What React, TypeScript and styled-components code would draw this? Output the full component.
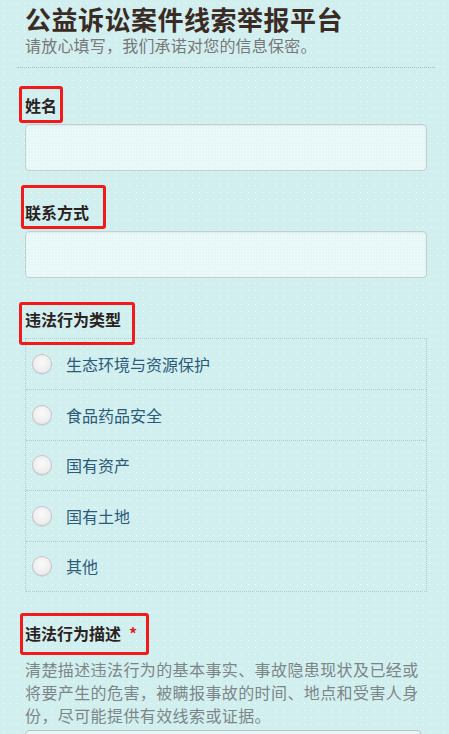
import React from 'react'
import styled, { createGlobalStyle } from 'styled-components'

const GlobalStyle = createGlobalStyle`
  html, body {
    margin: 0;
    padding: 0;
  }
  body {
    background-color: #d2eff0;
    background-image: radial-gradient(rgba(255, 255, 255, 0.7) 0.7px, transparent 1px);
    background-size: 7px 7px;
    font-family: 'Noto Sans CJK SC', 'Noto Sans', sans-serif;
    overflow: hidden;
  }
`

const Page = styled.div`
  padding: 0 14px 0 17px;
`

const Header = styled.header`
  padding: 4px 8px 12px;
  border-bottom: 1px dotted #a9bcbc;
`

const Title = styled.h1`
  margin: 0;
  font-size: 26px;
  line-height: 30px;
  font-weight: 700;
  letter-spacing: 0.5px;
  color: #3a2b24;
`

const Subtitle = styled.p`
  margin: 1px 0 0;
  font-size: 16px;
  line-height: 20px;
  letter-spacing: 0.2px;
  color: #777777;
`

const Form = styled.form`
  padding: 26px 8px 0;
  display: flex;
  flex-direction: column;
  gap: 30px;
`

const Field = styled.div`
  display: flex;
  flex-direction: column;
  gap: 8px;
`

const LabelRow = styled.div`
  position: relative;
  font-size: 16px;
  line-height: 22px;
  font-weight: 700;
  color: #2b221e;
`

type MarkProps = { $top: number; $left: number; $width: number; $height: number }

// red annotation frame drawn over the label
const Mark = styled.span<MarkProps>`
  position: absolute;
  top: ${p => p.$top}px;
  left: ${p => p.$left}px;
  width: ${p => p.$width}px;
  height: ${p => p.$height}px;
  box-sizing: border-box;
  border: 3px solid #f21a1a;
  border-radius: 3px;
  pointer-events: none;
`

const Required = styled.span`
  color: #e02020;
  margin-left: 8px;
`

const TextInput = styled.input`
  box-sizing: border-box;
  width: 100%;
  height: 47px;
  margin: 0;
  border: 1px solid #c6cfcf;
  border-radius: 4px;
  background-color: #e5f7f7;
  background-image: radial-gradient(rgba(255, 255, 255, 0.8) 0.6px, transparent 0.9px);
  background-size: 3px 3px;
  box-shadow: inset 0 1px 2px rgba(0, 0, 0, 0.05);
  outline: none;
`

const RadioGroup = styled.div`
  border: 1px dotted #a9cdd3;
  display: flex;
  flex-direction: column;
`

const RadioRow = styled.label`
  box-sizing: border-box;
  display: flex;
  align-items: center;
  gap: 14px;
  height: 50.4px;
  padding-left: 6px;
  font-size: 16px;
  color: #2c5b79;
  & + & {
    border-top: 1px dotted #a9cdd3;
  }
`

const RadioDot = styled.span`
  box-sizing: border-box;
  width: 20px;
  height: 20px;
  border-radius: 50%;
  border: 1px solid #c9c3c9;
  background: radial-gradient(circle at 50% 40%, #fafafa, #e6e6e6);
  box-shadow: 0 1px 1px rgba(0, 0, 0, 0.08);
  flex-shrink: 0;
`

const Hint = styled.p`
  margin: 6px 0 0;
  font-size: 16px;
  line-height: 23px;
  letter-spacing: 0.4px;
  color: #7c8686;
`

const TextArea = styled.textarea`
  box-sizing: border-box;
  width: 98.5%;
  height: 120px;
  margin-top: 3px;
  border: 1px solid #b9c2c2;
  border-radius: 4px;
  background: #e5f7f7;
  resize: none;
`

const options = ['生态环境与资源保护', '食品药品安全', '国有资产', '国有土地', '其他']

export default function App() {
  return (
    <Page>
      <GlobalStyle />
      <Header>
        <Title>公益诉讼案件线索举报平台</Title>
        <Subtitle>请放心填写，我们承诺对您的信息保密。</Subtitle>
      </Header>
      <Form>
        <Field>
          <LabelRow>
            姓名
            <Mark $top={-8} $left={-6} $width={44} $height={37} />
          </LabelRow>
          <TextInput type='text' />
        </Field>
        <Field>
          <LabelRow>
            联系方式
            <Mark $top={-16} $left={-4} $width={85} $height={44} />
          </LabelRow>
          <TextInput type='text' />
        </Field>
        <Field>
          <LabelRow>
            违法行为类型
            <Mark $top={-6} $left={-6} $width={116} $height={43} />
          </LabelRow>
          <RadioGroup>
            {options.map(o => (
              <RadioRow key={o}>
                <RadioDot />
                {o}
              </RadioRow>
            ))}
          </RadioGroup>
        </Field>
        <Field>
          <LabelRow>
            违法行为描述<Required>*</Required>
            <Mark $top={-9} $left={-5} $width={129} $height={42} />
          </LabelRow>
          <div>
            <Hint>
              清楚描述违法行为的基本事实、事故隐患现状及已经或将要产生的危害，被瞒报事故的时间、地点和受害人身份，尽可能提供有效线索或证据。
            </Hint>
            <TextArea />
          </div>
        </Field>
      </Form>
    </Page>
  )
}
